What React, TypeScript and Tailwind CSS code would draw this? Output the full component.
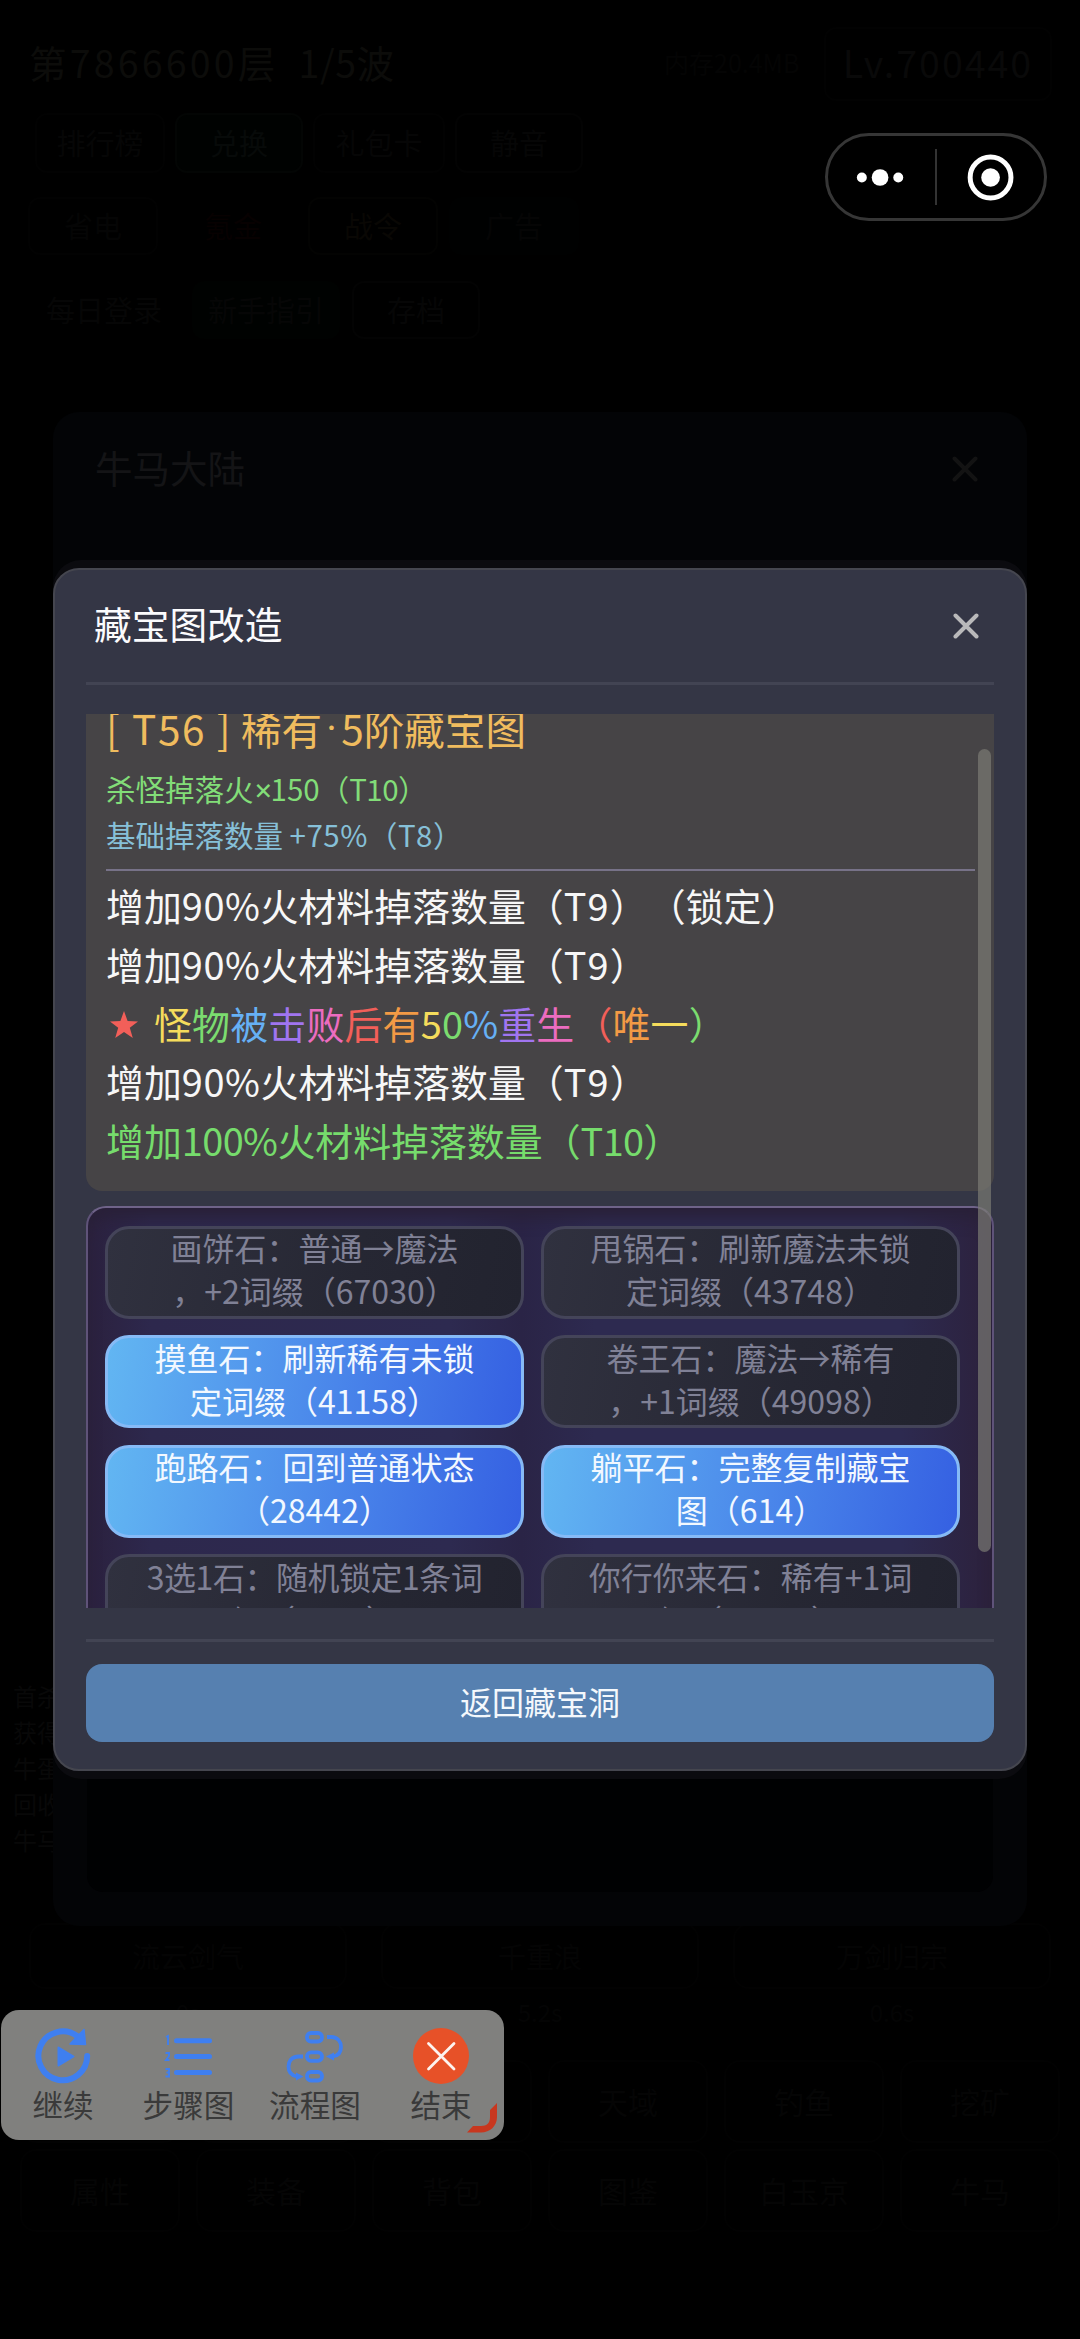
import React from 'react';

interface Stone {
  lines: string[];
  active?: boolean;
}

const stones: Stone[] = [
  { lines: ['画饼石：普通→魔法', '，+2词缀（67030）'] },
  { lines: ['甩锅石：刷新魔法未锁', '定词缀（43748）'] },
  { lines: ['摸鱼石：刷新稀有未锁', '定词缀（41158）'], active: true },
  { lines: ['卷王石：魔法→稀有', '，+1词缀（49098）'] },
  { lines: ['跑路石：回到普通状态', '（28442）'], active: true },
  { lines: ['躺平石：完整复制藏宝', '图（614）'], active: true },
  { lines: ['3选1石：随机锁定1条词', '缀（1204）'] },
  { lines: ['你行你来石：稀有+1词', '缀（10930）'] },
];

const rainbow = [
  'text-[#f5dc5c]',
  'text-[#7bdc6f]',
  'text-[#66b0f5]',
  'text-[#a075f0]',
  'text-[#ec6cc0]',
  'text-[#f25f59]',
  'text-[#f29a45]',
];

const uniqueAffix = '怪物被击败后有50%重生（唯一）';

const CloseIcon = ({ className }: { className: string }) => (
  <svg viewBox="0 0 26 26" className={className} fill="none" stroke="currentColor" strokeWidth="4" strokeLinecap="round">
    <path d="M2.5 2.5 L23.5 23.5 M23.5 2.5 L2.5 23.5" />
  </svg>
);

const Capsule = () => (
  <div className="absolute left-[825px] top-[133px] flex h-[88px] w-[222px] items-center rounded-full border-[3px] border-[#363636]">
    <svg viewBox="0 0 108 84" className="-ml-px h-[84px] w-[108px]" fill="#fff">
      <circle cx="35" cy="42.5" r="5" />
      <circle cx="53.3" cy="42.5" r="8.4" />
      <circle cx="71.6" cy="42.5" r="5" />
    </svg>
    <div className="h-[56px] w-[3px] bg-[#333]" />
    <svg viewBox="0 0 107 84" className="h-[84px] w-[107px]" fill="none">
      <circle cx="53.8" cy="42.5" r="20.5" stroke="#fff" strokeWidth="5" />
      <circle cx="53.8" cy="42.5" r="9.4" fill="#fff" />
    </svg>
  </div>
);

// the game page, nearly black under two overlays
const GamePage = () => (
  <div className="flex h-full flex-col">
    <div className="flex h-[101px] items-end pl-[29px] pr-[28px] pt-[27px]">
      <div className="flex h-[74px] flex-1 items-center gap-[20px] whitespace-pre pb-[3px] text-[37.5px] text-[#0c0c0a]">
        <span className="tracking-[3.2px]">第7866600层</span>
        <span className="tracking-[0.6px]">1/5波</span>
      </div>
      <div className="flex h-[74px] w-[160px] items-center pb-[3px] text-[25px] text-[#040404]">内存20.4MB</div>
      <div className="flex h-[74px] w-[228px] items-center justify-center rounded-xl border-2 border-[#020202] pb-[3px] text-[37.5px] tracking-[2px] text-[#090909]">
        Lv.700440
      </div>
    </div>
    <div className="mt-[12px] flex h-[60px] gap-[10px] pl-[35px] text-[29px] text-[#060606]">
      <div className="flex w-[130px] items-center justify-center rounded-xl border-2 border-[#020202]">排行榜</div>
      <div className="flex w-[128px] items-center justify-center rounded-xl border-2 border-[#030504] bg-[#000201] text-[#070a09]">兑换</div>
      <div className="flex w-[132px] items-center justify-center rounded-xl border-2 border-[#020202]">礼包卡</div>
      <div className="flex w-[128px] items-center justify-center rounded-xl border-2 border-[#030303]">静音</div>
    </div>
    <div className="mt-[24px] flex h-[58px] gap-[11px] pl-[28px] text-[29px] text-[#050505]">
      <div className="flex w-[130px] items-center justify-center rounded-xl border-2 border-[#020202]">省电</div>
      <div className="flex w-[128px] items-center justify-center rounded-xl text-[#070101]">氪金</div>
      <div className="flex w-[130px] items-center justify-center rounded-xl border-2 border-[#030302] text-[#090704]">战令</div>
      <div className="flex w-[130px] items-center justify-center rounded-xl bg-[#000101]">广告</div>
    </div>
    <div className="mt-[26px] flex h-[58px] gap-[12px] pl-[28px] text-[29px] text-[#060606]">
      <div className="flex w-[152px] items-center justify-center">每日登录</div>
      <div className="flex w-[148px] items-center justify-center rounded-xl bg-[#000201]">新手指引</div>
      <div className="flex w-[128px] items-center justify-center rounded-xl border-2 border-[#030303]">存档</div>
    </div>
    <div className="mt-[1339px] flex h-[186px] flex-col pl-[13px] text-[24px] leading-[36px] text-[#080808]">
      <span>首杀</span>
      <span>获得</span>
      <span>牛蛋</span>
      <span>回收</span>
      <span>牛马</span>
    </div>
    <div className="mt-[59px] grid h-[66px] grid-cols-3 gap-[34px] px-[29px] text-[28px] text-[#040404]">
      <div className="flex items-center justify-center rounded-2xl border-2 border-[#020202]">流云剑气</div>
      <div className="flex items-center justify-center rounded-2xl border-2 border-[#020202]">千重浪</div>
      <div className="flex items-center justify-center rounded-2xl border-2 border-[#020202]">万剑归宗</div>
    </div>
    <div className="mt-[5px] grid h-[38px] grid-cols-3 gap-[34px] px-[29px] text-center text-[24px] text-[#040404]">
      <span>0s</span>
      <span>5.2s</span>
      <span>0.6s</span>
    </div>
    <div className="mt-[28px] grid grid-cols-6 gap-x-[16px] gap-y-[6px] px-[20px] text-[30px] text-[#050505]">
      {['', '', '', '天域', '钓鱼', '挖矿', '属性', '装备', '背包', '图鉴', '白玉京', '牛马'].map((name, i) => (
        <div key={i} className="flex h-[83px] items-center justify-center rounded-2xl border-2 border-[#020202]">
          {name}
        </div>
      ))}
    </div>
  </div>
);

const BackModal = () => (
  <div className="absolute left-[53px] top-[412px] flex h-[1514px] w-[974px] flex-col rounded-[26px] bg-[#030406] px-[34px] pb-[34px]">
    <div className="flex h-[114px] items-center justify-between pl-[8px] pr-[15px] text-[37.5px] text-[#141416]">
      <span className="-mt-[4px]">牛马大陆</span>
      <CloseIcon className="h-[26px] w-[26px] text-[#131313]" />
    </div>
    <div className="mt-[200px] flex-1 rounded-2xl bg-[#000102]" />
  </div>
);

const ItemCard = () => (
  <div className="rounded-b-[16px] bg-[#464446] pb-[21px] pl-[20px] pr-[19px]">
    <div className="-mt-[16px] flex h-[66px] whitespace-pre text-[40.6px] leading-[60px] text-[#f0bc5e]">
      <span className="w-[135px] tracking-[1.6px]">[ T56 ]</span>
      <span>稀有</span>
      <span className="w-[19px] text-center font-[Roboto]">·</span>
      <span>5阶藏宝图</span>
    </div>
    <div className="flex h-[46px] text-[29.5px] leading-[48px] text-[#82dd78]">
      <span>杀怪掉落火</span>
      <span className="w-[17px] text-center font-[Inter]">×</span>
      <span>150（<span className="tracking-[-0.5px]">T10</span>）</span>
    </div>
    <div className="h-[46px] text-[29.5px] leading-[48px] text-[#86c0d8]">
      基础掉落数量 <span className="tracking-[0.5px]">+75%（T8）</span>
    </div>
    <div className="mb-[5px] mt-[13px] h-[2px] bg-[#777288]" />
    <div className="text-[37.9px] leading-[58.8px] text-[#f7f7f7]">
      <p>增加<span className="tracking-[0.6px]">90%</span>火材料掉落数量（<span className="tracking-[1.2px]">T9</span>）（锁定）</p>
      <p>增加<span className="tracking-[0.6px]">90%</span>火材料掉落数量（<span className="tracking-[1.2px]">T9</span>）</p>
      <p className="flex">
        <svg viewBox="0 0 30 30" className="ml-[3px] mr-[15px] mt-[16px] h-[30px] w-[30px]" fill="#f25f59">
          <path d="M15 1 L18.6 11 L29 11.4 L20.8 17.8 L23.8 28 L15 22 L6.2 28 L9.2 17.8 L1 11.4 L11.4 11 Z" />
        </svg>
        {uniqueAffix.split('').map((char, i) => (
          <span key={i} className={`${rainbow[i % rainbow.length]} tracking-[0.2px]`}>{char}</span>
        ))}
      </p>
      <p>增加<span className="tracking-[0.6px]">90%</span>火材料掉落数量（<span className="tracking-[1.2px]">T9</span>）</p>
      <p className="text-[#76dc6c]">增加<span className="tracking-[-0.6px]">100%</span>火材料掉落数量（<span className="tracking-[-0.6px]">T10</span>）</p>
    </div>
  </div>
);

const StoneButton: React.FC<Stone> = ({ lines, active }) => (
  <button
    className={
      active
        ? 'flex h-[93px] flex-col items-center justify-center rounded-[24px] border-[3px] border-[#86baf6] bg-linear-[100deg,#62b6f2,#4a86ea_55%,#3560e2] pb-[6px] text-[32px] leading-[43px] text-[#f2f8ff]'
        : 'flex h-[93px] flex-col items-center justify-center rounded-[24px] border-[3px] border-[#444459] bg-linear-[100deg,#30313f,#262733_60%,#22232f] pb-[6px] text-[32px] leading-[43px] text-[#808196]'
    }
  >
    {lines.map((line) => (
      <span key={line} className={line.startsWith('3选') ? 'whitespace-nowrap tracking-[-0.5px]' : 'whitespace-nowrap'}>{line}</span>
    ))}
  </button>
);

const StonePanel = () => (
  <div className="mt-[15px] rounded-[20px] border-2 border-[#5f5379] border-t-[#6f6389] bg-linear-[90deg,#2b213e,#2d284d_7%,#2d2a50_40%,#2a2446_48%,#2d2a50_56%,#2d2a50_90%,#2c213c] pb-[20px] pl-[17px] pr-[32px] pt-[18px] shadow-[inset_0_14px_16px_-4px_#292038]">
    <div className="grid grid-cols-2 gap-x-[17px] gap-y-[16.4px]">
      {stones.map((stone) => (
        <StoneButton key={stone.lines[0]} {...stone} />
      ))}
    </div>
  </div>
);

const MapModal = () => (
  <>
    <div className="absolute left-[53px] top-[560px] h-[1219px] w-[974px] rounded-[28px] bg-[#0b0b0f]" />
    <div className="absolute left-[53px] top-[568px] flex h-[1203px] w-[974px] flex-col rounded-[26px] border-2 border-[#45464f] bg-[#343645] px-[31px]">
      <div className="flex h-[112px] items-center justify-between pl-[8px] pr-[15px] text-[37.7px] text-[#fbfbfd]">
        <span className="-mt-[5px]">藏宝图改造</span>
        <CloseIcon className="h-[26px] w-[26px] text-[#b9b9ba]" />
      </div>
      <div className="h-[3px] shrink-0 bg-[#424453]" />
      <div className="relative mt-[29px] h-[894px] shrink-0 overflow-hidden">
        <ItemCard />
        <StonePanel />
        <div className="absolute right-[3px] top-[35px] h-[803px] w-[13px] rounded-full bg-[#7b7b73]/70" />
      </div>
      <div className="mt-[31px] h-[3px] shrink-0 bg-[#424453]" />
      <button className="mt-[22px] h-[78px] shrink-0 rounded-[16px] bg-[#5680b0] pb-[4px] text-[32px] text-[#f4f8fc]">返回藏宝洞</button>
    </div>
  </>
);

const ContinueIcon = () => (
  <svg viewBox="0 0 56 56" className="h-[56px] w-[56px]" fill="none" stroke="#3f7ff0" strokeWidth="6">
    <path d="M52.2 28 A24.4 24.4 0 1 1 42 8" strokeLinecap="round" />
    <path d="M49 1.5 L50.5 16.5 L35 16 Z" fill="#3f7ff0" strokeWidth="1.5" strokeLinejoin="round" />
    <path d="M23.5 19.5 L38.5 28.5 L23.5 37.5 Z" fill="#3f7ff0" strokeWidth="2" strokeLinejoin="round" />
  </svg>
);

const StepsIcon = () => (
  <svg viewBox="0 0 56 56" className="h-[56px] w-[56px]" fill="none" stroke="#3f7ff0">
    <path d="M15.5 12.7 H48.5 M15.5 28.5 H48.5 M15.5 44.5 H48.5" strokeWidth="5" strokeLinecap="round" />
    <path d="M5 9 L7 8 V17 M4.5 25 H8 V28 L5 32 H8.5 M4.5 41 H8 V48.5 H4.5 M8 44.5 H5.5" strokeWidth="1.9" />
  </svg>
);

const FlowIcon = () => (
  <svg viewBox="0 0 58 56" className="h-[56px] w-[58px]" fill="none" stroke="#3f7ff0" strokeWidth="3.8">
    <rect x="21" y="5" width="15" height="8.5" rx="4" />
    <rect x="21" y="24.3" width="15" height="8.5" rx="4" />
    <rect x="21" y="44" width="15" height="8.5" rx="4" />
    <path d="M41 9 H45 C52 9 55 14 55 19 C55 24 53 27.5 47 28.5 M17 28.5 H13 C5 28.5 2.5 34 2.5 38.5 C2.5 44 5.5 47.5 11 48.5" />
    <path d="M48 24.5 L40 28.5 L48 32.5 Z M10 44.5 L17.5 48.5 L10 52.5 Z" fill="#3f7ff0" stroke="none" />
  </svg>
);

const EndIcon = () => (
  <svg viewBox="0 0 56 56" className="h-[56px] w-[56px]" fill="none">
    <circle cx="28" cy="28" r="28" fill="#e75128" />
    <path d="M15.5 15.5 L41 41 M41 15.5 L15.5 41" stroke="#fdf3ef" strokeWidth="2.8" strokeLinecap="round" />
  </svg>
);

const Toolbar = () => (
  <div className="absolute left-px top-[2010px] flex h-[130px] w-[503px] rounded-[18px] bg-[#80807e] text-[30.6px] leading-[40px] text-[#3a3a3a]">
    <div className="flex w-[124px] flex-col items-center pt-[18px]">
      <ContinueIcon />
      <span>继续</span>
    </div>
    <div className="flex w-[127px] flex-col items-center pt-[18px]">
      <StepsIcon />
      <span>步骤图</span>
    </div>
    <div className="flex w-[126px] flex-col items-center pt-[18px]">
      <FlowIcon />
      <span>流程图</span>
    </div>
    <div className="flex w-[126px] flex-col items-center pt-[18px]">
      <EndIcon />
      <span>结束</span>
    </div>
    <svg viewBox="0 0 30 30" className="absolute bottom-[7px] right-[7px] h-[30px] w-[30px]" fill="#c8371f">
      <path d="M30 0 V14 C30 23 23 29.5 14 29.5 H0 L6 23 H14 C20 23 23 20 23 14 V7 Z" />
    </svg>
  </div>
);

const App: React.FC = () => {
  return (
    <div className="relative h-[2339px] w-[1080px] overflow-hidden bg-black font-['Noto_Sans_CJK_SC',sans-serif] [text-spacing-trim:space-all]">
      <GamePage />
      <BackModal />
      <MapModal />
      <Capsule />
      <Toolbar />
    </div>
  );
};

export default App;
